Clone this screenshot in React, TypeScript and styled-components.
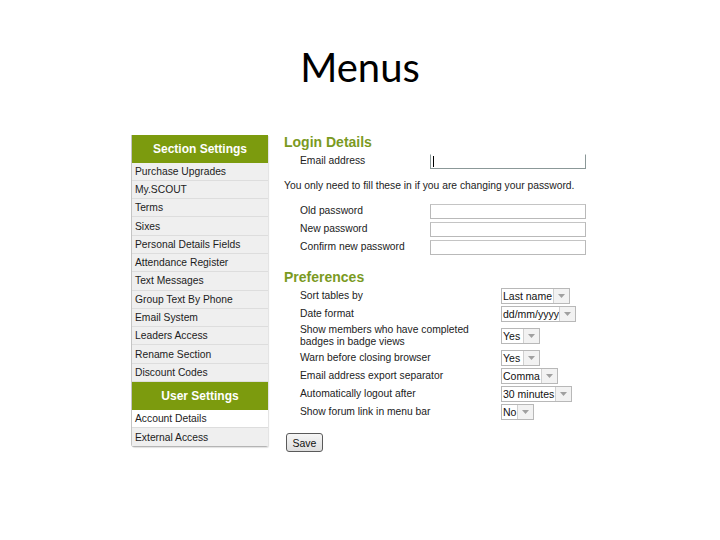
import * as React from "react";

import styled, { createGlobalStyle } from "styled-components";

const GlobalStyle = createGlobalStyle`
	html,
	body {
		margin: 0;
		padding: 0;
		background: #ffffff;
	}
`;

const Page = styled.div`
	width: 720px;
	height: 540px;
	padding-top: 40px;
	box-sizing: border-box;

	display: flex;
	flex-direction: column;

	font-family: "Liberation Sans", Arial, sans-serif;
	color: #222222;
`;

const Title = styled.h1`
	margin: 0;

	font-family: Lato, "Open Sans", sans-serif;
	font-weight: 400;
	font-size: 40px;
	line-height: 54px;
	text-align: center;
	color: #000000;
`;

const Content = styled.div`
	display: flex;
	align-items: flex-start;
	gap: 16px;

	margin-top: 41px;
	padding-left: 131px;
`;

/* ---------- side menu ---------- */

const Sidebar = styled.nav`
	width: 137px;

	display: flex;
	flex-direction: column;

	border-left: 1px solid #c4c4c4;
	border-bottom: 1px solid #b4b4b4;
	border-radius: 0 0 2px 3px;
	box-shadow: 1px 1px 1px rgba(0, 0, 0, 0.12);
	box-sizing: border-box;
`;

const MenuHeader = styled.div`
	height: 27.5px;

	display: flex;
	align-items: center;
	justify-content: center;

	background-color: #7c9b0e;
	color: #ffffff;

	font-size: 12px;
	font-weight: bold;
`;

const MenuItem = styled.div<{ $active?: boolean }>`
	height: 18.3px;
	padding-left: 3px;

	display: flex;
	align-items: center;

	background-color: ${(props) => (props.$active ? "#ffffff" : "#efefef")};
	border-bottom: 1px solid #dddddd;
	box-sizing: border-box;

	font-size: 10.3px;
	color: #1c1c1c;
	white-space: nowrap;

	&:last-child {
		border-bottom: none;
	}
`;

/* ---------- form ---------- */

const Main = styled.div`
	width: 304px;

	display: flex;
	flex-direction: column;
`;

const SectionTitle = styled.h2<{ $top?: number }>`
	margin: ${(props) => props.$top || 0}px 0 2px;

	font-size: 14px;
	line-height: 15px;
	font-weight: bold;
	color: #7b9a1f;
`;

const Note = styled.p`
	margin: 9px 0 9px;

	font-size: 10.3px;
	line-height: 14px;
	white-space: nowrap;
`;

const FieldRow = styled.div<{ $labelWidth: number; $height?: number }>`
	height: ${(props) => props.$height || 18}px;
	padding-left: 16px;

	display: grid;
	grid-template-columns: ${(props) => props.$labelWidth}px auto;
	align-items: center;

	font-size: 10.3px;
	line-height: 12.5px;
`;

const Label = styled.span`
	max-width: 180px;
`;

const TextBox = styled.span<{ $focused?: boolean }>`
	width: 156px;
	height: 15px;

	display: flex;
	align-items: center;
	padding-left: 2px;

	border: 1px solid ${(props) => (props.$focused ? "#8b9898" : "#b9b9b9")};
	border-top-color: ${(props) => (props.$focused ? "transparent" : "#c4c4c4")};
	box-sizing: border-box;
	background: #ffffff;
`;

const Caret = styled.span`
	width: 1px;
	height: 11px;
	background: #000000;
`;

const Select = styled.span`
	height: 16px;

	display: inline-flex;
	align-items: stretch;
	justify-self: start;

	border: 1px solid #b8b8b8;
	box-sizing: border-box;
	background: #ffffff;

	font-size: 10.5px;
	line-height: 14px;
	color: #111111;
`;

const SelectText = styled.span<{ $width: number }>`
	width: ${(props) => props.$width}px;
	padding-left: 1px;
	overflow: hidden;
	white-space: nowrap;
`;

const SelectArrow = styled.span`
	width: 15px;

	display: flex;
	align-items: center;
	justify-content: center;

	background: #f2f2f2;
	border-left: 1px solid #d0d0d0;
`;

const SaveButton = styled.button`
	width: 37px;
	height: 19px;
	margin: 12px 0 0 2px;
	padding: 0;

	background: linear-gradient(#f6f6f6, #dedede);
	border: 1px solid #5a5a5a;
	border-radius: 3px;

	font-family: "Liberation Sans", Arial, sans-serif;
	font-size: 10.5px;
	color: #111111;
`;

const Arrow = () => (
	<svg width="7" height="4" viewBox="0 0 7 4">
		<path d="M0 0h7L3.5 4z" fill="#a0a0a0" />
	</svg>
);

const Dropdown = (props: { value: string; width: number }) => (
	<Select>
		<SelectText $width={props.width}>{props.value}</SelectText>
		<SelectArrow>
			<Arrow />
		</SelectArrow>
	</Select>
);

const sectionItems = [
	"Purchase Upgrades",
	"My.SCOUT",
	"Terms",
	"Sixes",
	"Personal Details Fields",
	"Attendance Register",
	"Text Messages",
	"Group Text By Phone",
	"Email System",
	"Leaders Access",
	"Rename Section",
	"Discount Codes",
];

const preferences = [
	{ label: "Sort tables by", value: "Last name", width: 50 },
	{ label: "Date format", value: "dd/mm/yyyy", width: 56 },
	{
		label: "Show members who have completed badges in badge views",
		value: "Yes",
		width: 20,
		height: 26,
	},
	{ label: "Warn before closing browser", value: "Yes", width: 20 },
	{ label: "Email address export separator", value: "Comma", width: 38 },
	{ label: "Automatically logout after", value: "30 minutes", width: 52 },
	{ label: "Show forum link in menu bar", value: "No", width: 14 },
];

const App = (): JSX.Element => (
	<Page>
		<GlobalStyle />
		<Title>Menus</Title>
		<Content>
			<Sidebar>
				<MenuHeader>Section Settings</MenuHeader>
				{sectionItems.map((item) => (
					<MenuItem key={item}>{item}</MenuItem>
				))}
				<MenuHeader>User Settings</MenuHeader>
				<MenuItem $active>Account Details</MenuItem>
				<MenuItem>External Access</MenuItem>
			</Sidebar>

			<Main>
				<SectionTitle>Login Details</SectionTitle>
				<FieldRow $labelWidth={130}>
					<Label>Email address</Label>
					<TextBox $focused>
						<Caret />
					</TextBox>
				</FieldRow>
				<Note>You only need to fill these in if you are changing your password.</Note>
				<FieldRow $labelWidth={130}>
					<Label>Old password</Label>
					<TextBox />
				</FieldRow>
				<FieldRow $labelWidth={130}>
					<Label>New password</Label>
					<TextBox />
				</FieldRow>
				<FieldRow $labelWidth={130}>
					<Label>Confirm new password</Label>
					<TextBox />
				</FieldRow>

				<SectionTitle $top={14}>Preferences</SectionTitle>
				{preferences.map((pref) => (
					<FieldRow key={pref.label} $labelWidth={201} $height={pref.height}>
						<Label>{pref.label}</Label>
						<Dropdown value={pref.value} width={pref.width} />
					</FieldRow>
				))}
				<SaveButton type="button">Save</SaveButton>
			</Main>
		</Content>
	</Page>
);

export default App;
